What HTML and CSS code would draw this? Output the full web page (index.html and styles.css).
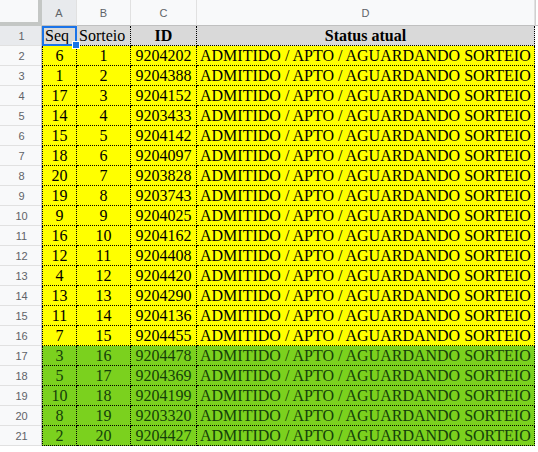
FILE: index.html
```html
<!DOCTYPE html>
<html>
<head>
<meta charset="utf-8">
<link rel="stylesheet" href="styles.css">
</head>
<body>
<div class="sheet" id="sheet">
  <div class="corner"></div>
  <div class="ch sel">A</div>
  <div class="ch">B</div>
  <div class="ch">C</div>
  <div class="ch">D</div>
  <div class="ch end"></div>

  <div class="rh sel">1</div>
  <div class="c hd first sel-cell">Seq<span class="handle"></span></div>
  <div class="c hd">Sorteio</div>
  <div class="c hd bold">ID</div>
  <div class="c hd bold center">Status atual</div>
  <div class="tail"></div>
</div>
<script src="script.js"></script>
</body>
</html>
```

FILE: script.js
```js
const rows = [
  [6,1,9204202,'y'],[1,2,9204388,'y'],[17,3,9204152,'y'],[14,4,9203433,'y'],
  [15,5,9204142,'y'],[18,6,9204097,'y'],[20,7,9203828,'y'],[19,8,9203743,'y'],
  [9,9,9204025,'y'],[16,10,9204162,'y'],[12,11,9204408,'y'],[4,12,9204420,'y'],
  [13,13,9204290,'y'],[11,14,9204136,'y'],[7,15,9204455,'y'],[3,16,9204478,'g'],
  [5,17,9204369,'g'],[10,18,9204199,'g'],[8,19,9203320,'g'],[2,20,9204427,'g']
];
const sheet = document.getElementById('sheet');
rows.forEach((r, i) => {
  const cls = r[3] === 'y' ? 'yel' : 'grn';
  sheet.insertAdjacentHTML('beforeend',
    `<div class="rh">${i + 2}</div>` +
    `<div class="c ${cls} first num">${r[0]}</div>` +
    `<div class="c ${cls} num">${r[1]}</div>` +
    `<div class="c ${cls} num">${r[2]}</div>` +
    `<div class="c ${cls} txt">ADMITIDO / APTO / AGUARDANDO SORTEIO</div>` +
    `<div class="tail"></div>`);
});
```

FILE: styles.css
```css
html, body {
  margin: 0;
  padding: 0;
  background: #ffffff;
}
.sheet {
  display: grid;
  grid-template-columns: 42px 35px 54px 66px 338px 3px;
  grid-template-rows: 26px repeat(21, 20px);
  width: 538px;
  height: 452px;
  align-content: start;
  background: #fff;
}
.corner {
  background: #f8f9fa;
  border-right: 4px solid #c4c7c5;
  border-bottom: 4px solid #c4c7c5;
  box-sizing: border-box;
}
.ch {
  box-sizing: border-box;
  background: #f8f9fa;
  border-right: 1px solid #e1e1e1;
  border-bottom: 1px solid #c0c0c0;
  font-family: "Liberation Sans", Arial, sans-serif;
  font-size: 11px;
  color: #5f6368;
  display: flex;
  align-items: center;
  justify-content: center;
  padding-top: 1px;
}
.ch.sel { background: #e8eaed; }
.ch.end { background: #ffffff; border-right: none; border-left: 1px solid #d0d0d0; }
.rh {
  box-sizing: border-box;
  background: #f8f9fa;
  border-right: 1px solid #c0c0c0;
  border-bottom: 1px solid #e1e1e1;
  font-family: "Liberation Sans", Arial, sans-serif;
  font-size: 11px;
  color: #5f6368;
  display: flex;
  align-items: center;
  justify-content: center;
  padding-left: 2px;
}
.rh.sel { background: #e8eaed; }
.c {
  box-sizing: border-box;
  border-right: 1px dotted #000;
  border-bottom: 1px dotted #000;
  font-family: "Liberation Serif", "Times New Roman", serif;
  font-size: 16px;
  line-height: 19px;
  color: #000;
  white-space: nowrap;
  overflow: hidden;
  padding: 0 2px;
  position: relative;
}
.c.first { border-left: 1px dotted #000; }
.hd {
  background: #d9d9d9;
  border-top: none;
  text-align: left;
}
.hd.bold { font-weight: bold; text-align: center; }
.hd.center { text-align: center; }
.yel { background: #ffff00; }
.grn { background: #7bd11e; color: #14400a; }
.num { text-align: center; }
.txt { text-align: left; padding-left: 3px; }
.tail {
  background: #ffffff;
}
.sel-cell {
  overflow: visible;
  outline: 2px solid #1a73e8;
  outline-offset: -2px;
  z-index: 2;
}
.handle {
  position: absolute;
  right: -4px;
  bottom: -4px;
  width: 6px;
  height: 6px;
  background: #1a73e8;
  border: 1px solid #fff;
}
```
